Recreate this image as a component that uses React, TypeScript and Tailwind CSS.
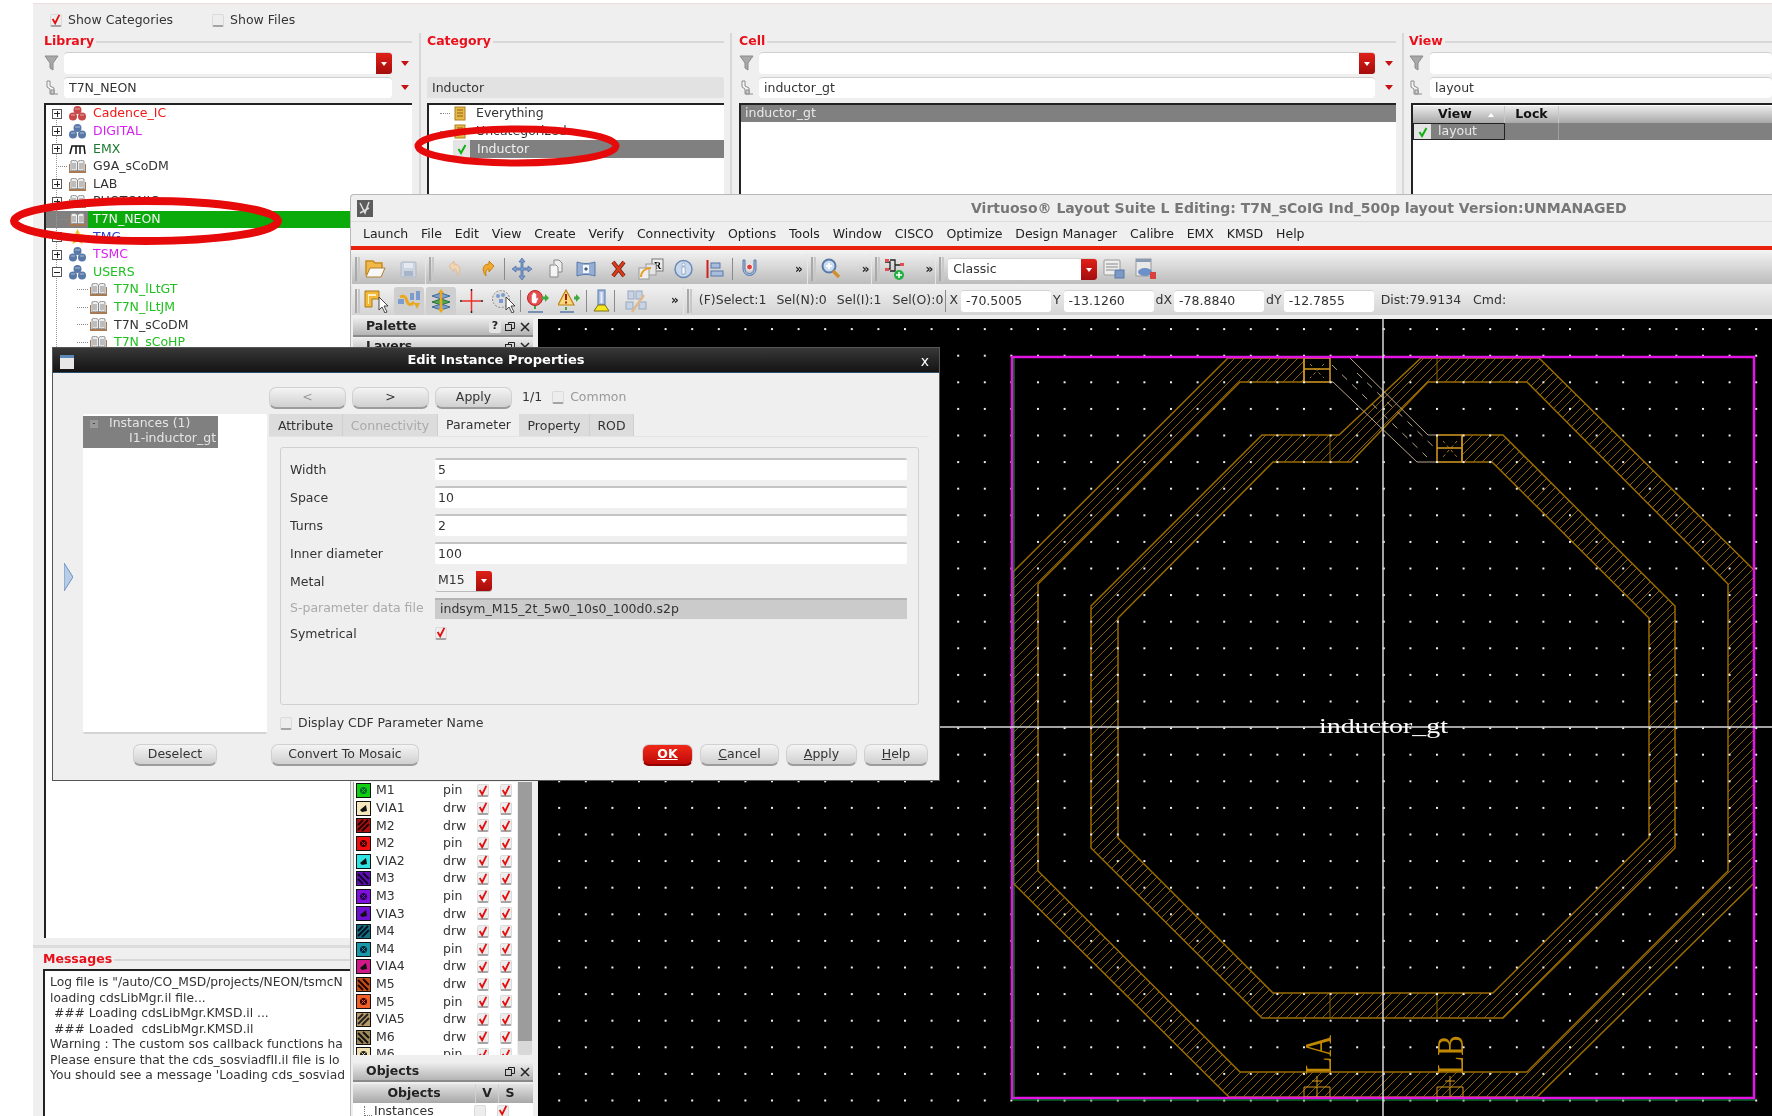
import React from "react";

const RedArrow = () => (
  <svg width="10" height="7" viewBox="0 0 10 7"><path d="M1 1h8L5 6z" fill="#c81010" /></svg>
);

const ComboButton = () => (
  <div className="flex w-[16px] h-full items-center justify-center rounded-r-[3px] bg-gradient-to-b from-[#e02018] to-[#a40c0c]">
    <svg width="8" height="6" viewBox="0 0 8 6"><path d="M1 1h6L4 5z" fill="#fff" /></svg>
  </div>
);

const Funnel = () => (
  <svg width="15" height="16" viewBox="0 0 15 16">
    <path d="M1 1h13L9 8v7L6 13V8z" fill="#a8a8a8" stroke="#8a8a8a" />
  </svg>
);

const TreeFilter = () => (
  <svg width="14" height="16" viewBox="0 0 14 16" fill="none" stroke="#8c8c8c">
    <path d="M2 1h3v5l4 2v6H5V9L2 7z" fill="#f4f4f4" />
    <path d="M6 10h3v4H6z" fill="#d0d0d0" />
    <path d="M9 14h4" />
  </svg>
);

const RedCheck = () => (
  <svg width="12" height="13" viewBox="0 0 12 13">
    <path d="M2 6l3 5 5-10" fill="none" stroke="#e41010" strokeWidth="2.200" />
  </svg>
);

const CheckBox = ({ checked }: { checked?: boolean }) => (
  <div className="flex h-[13px] w-[12px] shrink-0 items-center justify-center rounded-[2px] border border-[#dadada] border-b-2 border-b-[#a4a4a4] bg-[#ededed]">
    {checked && <RedCheck />}
  </div>
);

const GreenCheck = () => (
  <svg width="12" height="12" viewBox="0 0 12 12">
    <path d="M2.500 6 5 10l4.500-8" fill="none" stroke="#10b010" strokeWidth="2" />
  </svg>
);

const BookIcon = () => (
  <svg width="17" height="13" viewBox="0 0 17 13">
    <path d="M0 4v9h17V4h-1v7H1V4z" fill="#a87850" />
    <path d="M2 1c2-1 5-1 6.500 1C10 0 13 0 15 1v10c-2-1-5-1-6.500 0C7 10 4 10 2 11z" fill="#eee" stroke="#909090" />
    <path d="M8.500 2v9M4 3v6M6 3v6M11 3v6M13 3v6" stroke="#8a8a8a" />
  </svg>
);

const CubesIcon = ({ color }: { color: string }) => (
  <svg width="17" height="15" viewBox="0 0 17 15">
    <circle cx="8.500" cy="4" r="4" fill={color} />
    <circle cx="4" cy="10.500" r="4" fill={color} />
    <circle cx="13" cy="10.500" r="4" fill={color} />
    <path d="M6 3h5M2 9h4M11 9h4" stroke="#fff" strokeOpacity="0.5" />
  </svg>
);

const EmxIcon = () => (
  <svg width="17" height="12" viewBox="0 0 17 12" fill="none" stroke="#111" strokeWidth="1.500">
    <path d="M1 11 3 3h4v8M7 3h4v8M11 3h4l1 8" />
  </svg>
);

const ScrollIcon = () => (
  <svg width="14" height="15" viewBox="0 0 14 15">
    <rect x="2" y="1" width="10" height="13" fill="#e8b848" stroke="#b08020" />
    <path d="M4 4h6M4 7h6M4 10h6" stroke="#8a6010" />
  </svg>
);

const ExpandBox = ({ open }: { open?: boolean }) => (
  <div className="relative flex h-[10px] w-[10px] shrink-0 items-center justify-center border border-[#555] bg-white">
    <div className="h-px w-[6px] bg-[#222]" />
    {!open && <div className="absolute h-[6px] w-px bg-[#222]" />}
  </div>
);

type TreeItem = {
  label: string;
  color: string;
  icon: "red" | "blue" | "emx" | "book" | "star";
  box: "plus" | "minus" | "none";
  child?: boolean;
  selected?: boolean;
};

const libs: TreeItem[] = [
  { label: "Cadence_IC", color: "text-[#f01818]", icon: "red", box: "plus" },
  { label: "DIGITAL", color: "text-[#d820f0]", icon: "blue", box: "plus" },
  { label: "EMX", color: "text-[#1c7a30]", icon: "emx", box: "plus" },
  { label: "G9A_sCoDM", color: "text-[#333]", icon: "book", box: "none" },
  { label: "LAB", color: "text-[#333]", icon: "book", box: "plus" },
  { label: "PHOTONIC", color: "text-[#333]", icon: "book", box: "plus" },
  { label: "T7N_NEON", color: "text-white", icon: "book", box: "none", selected: true },
  { label: "TMG", color: "text-[#3040c0]", icon: "star", box: "plus" },
  { label: "TSMC", color: "text-[#d820f0]", icon: "blue", box: "plus" },
  { label: "USERS", color: "text-[#20c020]", icon: "blue", box: "minus" },
  { label: "T7N_lLtGT", color: "text-[#20c020]", icon: "book", box: "none", child: true },
  { label: "T7N_lLtJM", color: "text-[#20c020]", icon: "book", box: "none", child: true },
  { label: "T7N_sCoDM", color: "text-[#333]", icon: "book", box: "none", child: true },
  { label: "T7N_sCoHP", color: "text-[#20c020]", icon: "book", box: "none", child: true },
];

const LibIcon = ({ kind }: { kind: TreeItem["icon"] }) => {
  if (kind === "red") return <CubesIcon color="#c84848" />;
  if (kind === "blue") return <CubesIcon color="#5878a8" />;
  if (kind === "emx") return <EmxIcon />;
  if (kind === "star")
    return (
      <svg width="17" height="15" viewBox="0 0 17 15">
        <path d="M8.500 0l2.500 5 5.500.8-4 3.800 1 5.400-5-2.600L3.500 15l1-5.400-4-3.800L6 5z" fill="#f0c030" />
      </svg>
    );
  return <BookIcon />;
};

const LibRow = ({ item }: { item: TreeItem }) => (
  <div className={`flex h-[17.6px] items-center ${item.selected ? "bg-[#808080]" : ""}`}>
    {item.child ? (
      <div className="ml-[31px] mr-[2px] w-[11px] border-t border-dotted border-[#888]" />
    ) : item.box === "none" ? (
      <div className="ml-[10px] mr-[2px] w-[11px] border-t border-dotted border-[#888]" />
    ) : (
      <div className="ml-[6px] mr-[7px]">
        <ExpandBox open={item.box === "minus"} />
      </div>
    )}
    <div className="flex h-full w-[17px] shrink-0 items-center">
      <LibIcon kind={item.icon} />
    </div>
    {item.selected ? (
      <div className="ml-[2px] flex h-full flex-1 items-center bg-[#0bab0b] pl-[5px] text-[#f2f2f2]">{item.label}</div>
    ) : (
      <div className={`ml-[7px] ${item.color}`}>{item.label}</div>
    )}
  </div>
);

const Field = ({ text, width, combo }: { text?: string; width: string; combo?: boolean }) => (
  <div className={`flex h-full items-center justify-between rounded-[4px] border-t border-[#cfcfcf] bg-white ${width}`}>
    <span className="pl-[5px] text-[#333]">{text}</span>
    {combo && <ComboButton />}
  </div>
);

const PanelLabel = ({ text }: { text: string }) => (
  <div className="flex h-[16px] items-center pt-[1px]">
    <span className="text-[12.5px] font-bold text-[#e8101a]">{text}</span>
    <div className="ml-[2px] h-[2px] flex-1 bg-[#d8d8d8]" />
  </div>
);

const FilterRows = ({ value, field, arrow }: { value: string; field: string; arrow: string }) => (
  <>
    <div className="mt-[3px] flex h-[22px] items-center">
      <div className="flex w-[20px] shrink-0"><Funnel /></div>
      <Field width={field} combo />
      <div className={`flex items-center ${arrow}`}><RedArrow /></div>
    </div>
    <div className="mt-[3px] flex h-[21px] items-center">
      <div className="flex w-[20px] shrink-0 pl-[1px]"><TreeFilter /></div>
      <Field width={field} text={value} />
      <div className={`flex items-center ${arrow}`}><RedArrow /></div>
    </div>
  </>
);

const LibraryManager = () => (
  <div className="absolute left-[33px] top-[3px] h-[1113px] w-[1739px] border-t border-[#f0dcdc] bg-[#efefef]">
    <div className="flex h-[29px] items-center pl-[17px] pt-[3px]">
      <CheckBox checked />
      <span className="ml-[6px] text-[#333]">Show Categories</span>
      <div className="ml-[39px]"><CheckBox /></div>
      <span className="ml-[6px] text-[#333]">Show Files</span>
    </div>
    <div className="flex h-[906px]">
      <div className="ml-[11px] w-[377px] border-r-2 border-[#d8d8d8] pr-[7px]">
        <PanelLabel text="Library" />
        <FilterRows value="T7N_NEON" field="w-[328px]" arrow="ml-[8px]" />
        <div className="relative mt-[5px] h-[835px] border-l-2 border-t-2 border-[#222] bg-white">
          <div className="absolute left-[10px] top-[6px] h-[240px] border-l border-dotted border-[#999]" />
          {libs.map((l) => (
            <LibRow key={l.label} item={l} />
          ))}
        </div>
      </div>
      <div className="ml-[6px] w-[305px] border-r-2 border-[#d8d8d8] pr-[6px]">
        <PanelLabel text="Category" />
        <div className="mt-[28px] flex h-[21px] items-center rounded-t-[3px] bg-[#e2e2e2] pl-[5px] pt-[1px] text-[#333]">Inductor</div>
        <div className="mt-[5px] h-[835px] border-l-2 border-t-2 border-[#222] bg-white">
          <div className="flex h-[17.6px] items-center pl-[11px]">
            <div className="mr-[3px] w-[10px] border-t border-dotted border-[#888]" />
            <ScrollIcon />
            <span className="ml-[9px] text-[#333]">Everything</span>
          </div>
          <div className="flex h-[17.6px] items-center pl-[11px]">
            <div className="mr-[3px] w-[10px] border-t border-dotted border-[#888]" />
            <ScrollIcon />
            <span className="ml-[9px] text-[#333]">Uncategorized</span>
          </div>
          <div className="flex h-[18px] items-center pl-[24px]">
            <div className="flex h-full w-[17px] items-center justify-center bg-[#e4e4e4]"><GreenCheck /></div>
            <div className="flex h-full flex-1 items-center bg-[#808080] pl-[7px] text-[#f0f0f0]">Inductor</div>
          </div>
        </div>
      </div>
      <div className="ml-[7px] w-[665px] border-r-2 border-[#d8d8d8] pr-[6px]">
        <PanelLabel text="Cell" />
        <FilterRows value="inductor_gt" field="w-[616px]" arrow="ml-[9px]" />
        <div className="mt-[5px] h-[835px] border-l-2 border-t-2 border-[#222] bg-white">
          <div className="flex h-[17px] items-center bg-[#808080] pl-[4px] text-[#e8e8e8]">inductor_gt</div>
        </div>
      </div>
      <div className="ml-[5px] flex-1">
        <PanelLabel text="View" />
        <div className="mt-[3px] flex h-[22px] items-center">
          <div className="flex w-[21px] shrink-0"><Funnel /></div>
          <Field width="flex-1" />
        </div>
        <div className="mt-[3px] flex h-[21px] items-center">
          <div className="flex w-[21px] shrink-0"><TreeFilter /></div>
          <Field width="flex-1" text="layout" />
        </div>
        <div className="ml-[2px] mt-[5px] h-[835px] border-l-2 border-t-2 border-[#222] bg-white pt-[1px]">
          <div className="flex h-[17px] items-center bg-gradient-to-b from-[#ececec] to-[#a8a8a8] font-bold text-[#111]">
            <div className="flex h-full w-[92px] items-center justify-between border-r border-[#c8c8c8] pl-[25px] pr-[9px]">
              View
              <svg width="8" height="6" viewBox="0 0 8 6"><path d="M1 5h6L4 1z" fill="#fff" /></svg>
            </div>
            <div className="flex h-full w-[54px] items-center justify-center border-r border-[#c8c8c8]">Lock</div>
          </div>
          <div className="flex h-[17px] items-center bg-[#808080] text-[#e8e8e8]">
            <div className="flex h-full w-[92px] items-center border border-[#222]">
              <div className="flex h-full w-[17px] items-center justify-center bg-[#e4e4e4]"><GreenCheck /></div>
              <span className="pl-[7px]">layout</span>
            </div>
            <div className="h-full w-[54px] border-r border-[#a0a0a0]" />
          </div>
        </div>
      </div>
    </div>
    <div className="mt-[6px] h-[3px] bg-[#dcdcdc]" />
    <div className="pl-[10px] pt-[3px]">
      <PanelLabel text="Messages" />
      <div className="mt-[2px] h-[160px] overflow-hidden border-l-2 border-t-2 border-[#222] bg-white pl-[5px] pt-[4px] text-[12.3px] leading-[15.5px] text-[#333] whitespace-pre">
        <div>Log file is "/auto/CO_MSD/projects/NEON/tsmcN</div>
        <div>loading cdsLibMgr.il file...</div>
        <div> ### Loading cdsLibMgr.KMSD.il ...</div>
        <div> ### Loaded  cdsLibMgr.KMSD.il</div>
        <div>Warning : The custom sos callback functions ha</div>
        <div>Please ensure that the cds_sosviadfII.il file is lo</div>
        <div>You should see a message 'Loading cds_sosviad</div>
      </div>
    </div>
  </div>
);

// grip plus the faint notch between two toolbar segments
const Grip = () => (
  <div className="flex h-[24px] shrink-0 items-center gap-[1px]">
    <div className="-ml-[4px] mr-[2px] h-[30px] w-px bg-[#e6e6e6]" />
    <div className="h-[24px] w-[2px] bg-[#a8a8a8]" />
    <div className="h-[24px] w-[2px] bg-[#c8c8c8]" />
  </div>
);

const Sep = () => <div className="h-[22px] w-px shrink-0 bg-[#8a8a8a]" />;

const More = () => <span className="shrink-0 text-[12px] font-bold text-[#222]">»</span>;

const I = ({ w, children }: { w: number; children: React.ReactNode }) => (
  <svg width={w} height="24" viewBox={`0 0 ${w} 24`} className="shrink-0">
    {children}
  </svg>
);

const Toolbar1 = () => (
  <div className="flex h-[34px] items-center bg-gradient-to-b from-[#f4f4f4] to-[#bcbcbc] pl-[4px] pt-[4px]">
    <Grip />
    <div className="ml-[4px]">
      <I w={22}>
        <path d="M2 18V4h7l2 2h7v5" fill="#f0b848" stroke="#c88a20" strokeWidth="1.500" />
        <path d="M2 20l4-9h15l-4 9z" fill="#f8f8f8" stroke="#b08030" />
      </I>
    </div>
    <div className="ml-[14px]">
      <I w={17}>
        <rect x="1" y="5" width="15" height="15" rx="1" fill="#ccd4e0" stroke="#b0b8c8" />
        <rect x="4" y="6" width="9" height="5" fill="#e4e8f0" />
        <rect x="4" y="14" width="9" height="5" fill="#a8b4c8" />
      </I>
    </div>
    <div className="ml-[12px]"><Grip /></div>
    <div className="ml-[14px]">
      <I w={14}>
        <path d="M1 9l5-5v3c6 0 8 6 3 12 1-5-1-7-3-7v3z" fill="#f0d4b4" stroke="#dcbc98" />
      </I>
    </div>
    <div className="ml-[19px]">
      <I w={14}>
        <path d="M13 9L8 4v3C2 7 0 13 5 19c-1-5 1-7 3-7v3z" fill="#f0a830" stroke="#c88010" />
      </I>
    </div>
    <div className="ml-[9px]"><Sep /></div>
    <div className="ml-[7px]">
      <I w={20}>
        <path d="M10 1l3 4h-2v6h5V9l4 3-4 3v-2h-5v6h2l-3 4-3-4h2v-6H4v2l-4-3 4-3v2h5V5H7z" fill="#7c9cd0" stroke="#486c9c" strokeWidth="0.7" />
      </I>
    </div>
    <div className="ml-[17px]">
      <I w={14}>
        <path d="M5 7V3h5l3 3v9H9" fill="#eee" stroke="#888" />
        <path d="M1 8h6l2 2v10H1z" fill="#f4f4f4" stroke="#888" />
      </I>
    </div>
    <div className="ml-[13px]">
      <I w={20}>
        <path d="M1 5c6 2 12 2 18 0v14c-6-2-12-2-18 0z" fill="#94aed4" stroke="#5878a8" />
        <rect x="7" y="8" width="6" height="8" fill="#f4f4fa" />
        <path d="M8 12l2-2v4zM12 12l-2-2v4z" fill="#40587c" />
      </I>
    </div>
    <div className="ml-[15px]">
      <I w={15}>
        <path d="M2 5l11 14M13 5L2 19" stroke="#6a2418" strokeWidth="4" />
        <path d="M2 5l11 14M13 5L2 19" stroke="#dc3c1c" strokeWidth="2.500" />
      </I>
    </div>
    <div className="ml-[12px]">
      <I w={26}>
        <rect x="14" y="2" width="11" height="12" fill="#eee" stroke="#777" />
        <text x="16" y="12" fontSize="10" fontWeight="bold" fontFamily="Liberation Serif">R</text>
        <rect x="8" y="7" width="10" height="11" fill="#e4e4e4" stroke="#999" />
        <rect x="1" y="11" width="10" height="11" fill="#eee" stroke="#999" />
        <path d="M3 20c0-5 4-9 10-9" fill="none" stroke="#e8a020" strokeWidth="2" />
      </I>
    </div>
    <div className="ml-[10px]">
      <I w={19}>
        <circle cx="9.500" cy="12" r="8.500" fill="#c8d8ec" stroke="#6c88b4" strokeWidth="1.500" />
        <rect x="8" y="10" width="3" height="7" fill="#fff" stroke="#5878a8" strokeWidth="0.5" />
        <circle cx="9.500" cy="7.500" r="1.500" fill="#fff" stroke="#5878a8" strokeWidth="0.5" />
      </I>
    </div>
    <div className="ml-[13px]">
      <I w={18}>
        <path d="M1.500 3v18" stroke="#d02020" strokeWidth="2" />
        <rect x="5" y="6" width="9" height="5" fill="#a8bcdc" stroke="#5878a8" />
        <rect x="5" y="14" width="12" height="5" fill="#a8bcdc" stroke="#5878a8" />
      </I>
    </div>
    <div className="ml-[8px]"><Sep /></div>
    <div className="ml-[7px]">
      <I w={19}>
        <path d="M5 3H3v9a6.500 6.500 0 0 0 13 0V3h-2v9a4.500 4.500 0 0 1-9 0z" fill="#a8c0e0" stroke="#5878a8" />
        <circle cx="9.500" cy="10" r="3" fill="#e04040" stroke="#fff" />
      </I>
    </div>
    <div className="ml-[36px]"><More /></div>
    <div className="ml-[8px]"><Grip /></div>
    <div className="ml-[5px]">
      <I w={19}>
        <circle cx="8" cy="9" r="6.500" fill="#c8ddf0" stroke="#5878a8" strokeWidth="2" />
        <path d="M5 9h6M8 6v6" stroke="#fff" strokeWidth="2" />
        <path d="M12 14l6 6" stroke="#d09030" strokeWidth="3.500" />
      </I>
    </div>
    <div className="ml-[22px]"><More /></div>
    <div className="ml-[5px]"><Grip /></div>
    <div className="ml-[4px]">
      <I w={21}>
        <path d="M1 5h5v7H1M6 3h5v11H6M11 8h8" fill="none" stroke="#222" strokeWidth="1.300" />
        <rect x="1" y="2" width="4" height="3" fill="#e05050" />
        <rect x="1" y="11" width="4" height="3" fill="#e05050" />
        <rect x="16" y="6" width="4" height="3" fill="#e05050" />
        <circle cx="15" cy="18" r="5" fill="#20b040" />
        <path d="M12 18h6M15 15v6" stroke="#fff" strokeWidth="1.500" />
      </I>
    </div>
    <div className="ml-[21px]"><More /></div>
    <div className="ml-[6px]"><Grip /></div>
    <div className="ml-[4px] flex h-[22px] w-[149px] items-center justify-between rounded-[3px] border-t border-[#d4d4d4] bg-white">
      <span className="pl-[5px] text-[#333]">Classic</span>
      <ComboButton />
    </div>
    <div className="ml-[6px]">
      <I w={22}>
        <rect x="1" y="3" width="16" height="15" rx="1" fill="#eee" stroke="#999" />
        <path d="M3 7h12M3 10h12M3 13h8" stroke="#888" />
        <rect x="12" y="13" width="9" height="8" fill="#7c98c4" stroke="#5878a8" />
      </I>
    </div>
    <div className="ml-[10px]">
      <I w={22}>
        <rect x="1" y="2" width="15" height="17" fill="#e8e8e8" stroke="#999" />
        <rect x="1" y="2" width="15" height="3" fill="#889ab4" />
        <ellipse cx="10" cy="15" rx="7" ry="4" fill="#6c90c8" />
        <rect x="15" y="15" width="6" height="7" fill="#d84040" />
      </I>
    </div>
  </div>
);

const CoordField = ({ value }: { value: string }) => (
  <div className="flex h-[22px] w-[90px] shrink-0 items-center rounded-[3px] border-t border-[#d4d4d4] bg-white pl-[5px] text-[#333]">{value}</div>
);

const Cursor = ({ x, y }: { x: number; y: number }) => (
  <path
    transform={`translate(${x} ${y})`}
    d="M0 0v13l3-3 3 6 2-1-3-6h4z"
    fill="#fff"
    stroke="#333"
    strokeWidth="0.9"
  />
);

const Toolbar2 = () => (
  <div className="mt-[2px] flex h-[29px] items-center bg-gradient-to-b from-[#f0f0f0] to-[#d4d4d4] pl-[4px] text-[#333]">
    <Grip />
    <div className="ml-[4px]">
      <I w={25}>
        <path d="M1 2h14v8H8v8H1z" fill="#f4b838" stroke="#a87818" />
        <path d="M4 5h8v2H5v8H4z" fill="#fff0c8" />
        <Cursor x={15} y={8} />
      </I>
    </div>
    <div className="ml-[5px] flex h-[28px] w-[30px] items-center justify-center rounded-[3px] bg-[#cfcfcf]">
      <I w={26}>
        <rect x="2" y="10" width="6" height="5" fill="#7c9cd0" />
        <rect x="14" y="4" width="4" height="7" fill="#7c9cd0" />
        <rect x="20" y="2" width="4" height="9" fill="#7c9cd0" />
        <path d="M4 8c4-2 6 0 7 4s4 5 7 1" fill="none" stroke="#e8a820" strokeWidth="3" />
        <path d="M18 14h6l-3 6z" fill="#e8a820" />
      </I>
    </div>
    <div className="ml-[2px] flex h-[28px] w-[30px] items-center justify-center rounded-[3px] bg-[#cfcfcf]">
      <I w={22}>
        <path d="M11 4l9 3-9 3-9-3z" fill="#7c9cd0" stroke="#406c98" />
        <path d="M11 10l9 3-9 3-9-3z" fill="#50a850" stroke="#2c7040" />
        <path d="M11 15l9 3-9 3-9-3z" fill="#7c9cd0" stroke="#406c98" />
        <path d="M11 4v17" stroke="#e8a820" strokeWidth="2.500" />
        <path d="M8 4l3-4 3 4zM8 20l3 4 3-4z" fill="#e8a820" />
      </I>
    </div>
    <div className="ml-[4px]">
      <I w={23}>
        <path d="M2 12h19M11.500 2v20" stroke="#f03028" strokeWidth="1.500" />
        <path d="M0 12h2M21 12h2M11.500 0v2M11.500 22v2" stroke="#222" strokeWidth="1.500" />
      </I>
    </div>
    <div className="ml-[8px]">
      <I w={26}>
        <circle cx="10" cy="10" r="8.500" fill="#dcdcdc" stroke="#888" strokeDasharray="2 1.500" />
        <circle cx="7" cy="7" r="2" fill="#7c9cd0" />
        <circle cx="12" cy="6" r="2" fill="#7c9cd0" />
        <rect x="8" y="10" width="4" height="4" fill="#7c9cd0" />
        <Cursor x={15} y={8} />
      </I>
    </div>
    <div className="ml-[3px]"><Sep /></div>
    <div className="ml-[5px]">
      <I w={25}>
        <circle cx="9" cy="9" r="7.500" fill="#e45050" stroke="#c02020" />
        <path d="M6 13V6h1v4V4h1v6V4h1v6V5h1v5l2-1-2 5H7z" fill="#fff" stroke="#fff" strokeWidth="0.500" />
        <path d="M16 9h4" stroke="#40a840" strokeWidth="3" />
        <path d="M19 5l4 4-4 4z" fill="#40a840" />
        <path d="M9 17v3" stroke="#40a840" strokeWidth="2" />
        <path d="M2 23h15" stroke="#5878a8" strokeWidth="1.500" />
      </I>
    </div>
    <div className="ml-[7px]">
      <I w={23}>
        <path d="M8 1l8 15H0z" fill="#f8d878" stroke="#c08018" strokeWidth="1.200" />
        <path d="M8 5v6M8 12.500v2" stroke="#a81818" strokeWidth="2" />
        <path d="M16 9h3" stroke="#40a840" strokeWidth="3" />
        <path d="M18 5l4 4-4 4z" fill="#40a840" />
        <path d="M8 18v3" stroke="#40a840" strokeWidth="2" />
        <path d="M2 23h14" stroke="#5878a8" strokeWidth="1.500" />
      </I>
    </div>
    <div className="ml-[5px]"><Sep /></div>
    <div className="ml-[5px]">
      <I w={19}>
        <rect x="6" y="1" width="7" height="15" fill="#a8c0e0" stroke="#5878a8" />
        <rect x="8.500" y="3" width="2" height="11" fill="#eef" />
        <path d="M2 22l4-6h7l4 6z" fill="#f4e820" stroke="#807010" />
      </I>
    </div>
    <div className="ml-[3px]"><Sep /></div>
    <div className="ml-[10px]">
      <I w={23}>
        <rect x="3" y="2" width="6" height="8" fill="#c8d4e4" stroke="#98a8c0" />
        <rect x="11" y="2" width="6" height="8" fill="#c8d4e4" stroke="#98a8c0" />
        <rect x="1" y="13" width="7" height="7" fill="#c8d4e4" stroke="#98a8c0" />
        <rect x="14" y="13" width="7" height="7" fill="#c8d4e4" stroke="#98a8c0" />
        <path d="M7 23L19 6" stroke="#e0b890" strokeWidth="2.500" />
      </I>
    </div>
    <div className="ml-[23px]"><More /></div>
    <div className="ml-[8px]"><Grip /></div>
    <span className="ml-[7px] shrink-0">(F)Select:1</span>
    <span className="ml-[10px] shrink-0">Sel(N):0</span>
    <span className="ml-[10px] shrink-0">Sel(I):1</span>
    <span className="ml-[11px] shrink-0">Sel(O):0</span>
    <div className="ml-[2px]"><Sep /></div>
    <span className="ml-[3px] shrink-0">X</span>
    <div className="ml-[3px]"><CoordField value="-70.5005" /></div>
    <span className="ml-[2px] shrink-0">Y</span>
    <div className="ml-[3px]"><CoordField value="-13.1260" /></div>
    <span className="ml-[2px] shrink-0">dX</span>
    <div className="ml-[2px]"><CoordField value="-78.8840" /></div>
    <span className="ml-[2px] shrink-0">dY</span>
    <div className="ml-[2px]"><CoordField value="-12.7855" /></div>
    <span className="ml-[7px] shrink-0">Dist:79.9134</span>
    <span className="ml-[12px] shrink-0">Cmd:</span>
  </div>
);

const DockButtons = ({ help }: { help?: boolean }) => (
  <div className="ml-auto flex items-center gap-[3px] pr-[2px] text-[11px] text-[#222]">
    {help && <span className="flex h-[13px] w-[12px] items-center justify-center rounded-[2px] bg-[#e4e4e4]">?</span>}
    <svg width="12" height="13" viewBox="0 0 12 13" fill="none" stroke="#222">
      <rect x="1.500" y="4.500" width="6" height="6" />
      <path d="M4.500 4.500v-2h6v6h-3" />
    </svg>
    <svg width="12" height="13" viewBox="0 0 12 13" stroke="#222" strokeWidth="1.500">
      <path d="M2 3l8 8M10 3l-8 8" />
    </svg>
  </div>
);

const DockTitle = ({ text, help }: { text: string; help?: boolean }) => (
  <div className="flex h-[19px] shrink-0 items-center border-b-2 border-[#8a8a8a] bg-gradient-to-b from-[#ececec] to-[#b4b4b4] pl-[13px] font-bold text-[#222]">
    {text}
    <DockButtons help={help} />
  </div>
);

type LayerRow = { name: string; purpose: string; bg: string; fg: string; hatch: "x" | "up" | "down" | "dot" };

const layerRows: LayerRow[] = [
  { name: "M1", purpose: "pin", bg: "#10d010", fg: "#063", hatch: "x" },
  { name: "VIA1", purpose: "drw", bg: "#f6e8bc", fg: "#111", hatch: "dot" },
  { name: "M2", purpose: "drw", bg: "#b01010", fg: "#200", hatch: "up" },
  { name: "M2", purpose: "pin", bg: "#f01010", fg: "#300", hatch: "x" },
  { name: "VIA2", purpose: "drw", bg: "#30e4e4", fg: "#111", hatch: "dot" },
  { name: "M3", purpose: "drw", bg: "#6010b0", fg: "#120030", hatch: "down" },
  { name: "M3", purpose: "pin", bg: "#8010e0", fg: "#200040", hatch: "x" },
  { name: "VIA3", purpose: "drw", bg: "#7010d0", fg: "#111", hatch: "dot" },
  { name: "M4", purpose: "drw", bg: "#107080", fg: "#012", hatch: "up" },
  { name: "M4", purpose: "pin", bg: "#1898a8", fg: "#023", hatch: "x" },
  { name: "VIA4", purpose: "drw", bg: "#d01888", fg: "#111", hatch: "dot" },
  { name: "M5", purpose: "drw", bg: "#c05018", fg: "#200", hatch: "down" },
  { name: "M5", purpose: "pin", bg: "#f06028", fg: "#300", hatch: "x" },
  { name: "VIA5", purpose: "drw", bg: "#b89868", fg: "#222", hatch: "up" },
  { name: "M6", purpose: "drw", bg: "#a08858", fg: "#111", hatch: "down" },
  { name: "M6", purpose: "pin", bg: "#f0e0b0", fg: "#222", hatch: "x" },
];

const Swatch = ({ row }: { row: LayerRow }) => (
  <svg width="15" height="15" viewBox="0 0 15 15" className="shrink-0">
    <rect x="0.500" y="0.500" width="14" height="14" fill={row.bg} stroke="#111" />
    {row.hatch === "x" && (
      <>
        <circle cx="7.500" cy="7.500" r="3.500" fill={row.fg} />
        <path d="M5.500 5.500l4 4M9.500 5.500l-4 4" stroke={row.bg} />
      </>
    )}
    {row.hatch === "dot" && <path d="M4 9l6-5 1 6-5 1z" fill={row.fg} />}
    {row.hatch === "up" && (
      <path d="M2 7l5-5M2 12l10-10M6 13l7-7" stroke={row.fg} strokeWidth="2" />
    )}
    {row.hatch === "down" && (
      <path d="M2 3l10 10M7 2l6 6M2 8l5 5" stroke={row.fg} strokeWidth="2" />
    )}
  </svg>
);

const Dock = () => (
  <div className="flex w-[187px] shrink-0 flex-col pl-[2px] pr-[5px] pt-[1px]">
    <DockTitle text="Palette" help />
    <div className="h-[1px] shrink-0" />
    <DockTitle text="Layers" />
    <div className="h-[425px] shrink-0" />
    <div className="flex h-[273px] shrink-0 overflow-hidden border-l border-[#999]">
      <div className="flex-1 bg-white">
        {layerRows.map((r, i) => (
          <div key={i} className="flex h-[17.6px] items-center pl-[2px] text-[#333]">
            <Swatch row={r} />
            <span className="ml-[5px] w-[67px] shrink-0">{r.name}</span>
            <span className="w-[34px] shrink-0">{r.purpose}</span>
            <CheckBox checked />
            <div className="ml-[11px]"><CheckBox checked /></div>
          </div>
        ))}
      </div>
      <div className="flex w-[16px] flex-col bg-[#efefef] px-[1px]">
        <div className="flex-1 bg-[#9c9c9c]" />
        <div className="h-[14px] rounded-b-[2px] bg-[#d8d8d8]" />
      </div>
    </div>
    <div className="mt-[8px] shrink-0">
      <DockTitle text="Objects" />
    </div>
    <div className="mt-[2px] flex h-[19px] shrink-0 items-center bg-gradient-to-b from-[#e4e4e4] to-[#a8a8a8] font-bold text-[#222]">
      <div className="flex h-full w-[123px] items-center justify-center border-r border-[#d0d0d0]">Objects</div>
      <div className="flex h-full w-[23px] items-center justify-center border-r border-[#d0d0d0]">V</div>
      <div className="flex h-full w-[22px] items-center justify-center">S</div>
      <div className="flex-1 bg-[#e8e8e8]" />
    </div>
    <div className="flex h-[16px] shrink-0 items-center bg-white pl-[11px] text-[#333]">
      <div className="mr-[2px] h-[10px] w-[8px] border-b border-l border-dotted border-[#777]" />
      <span className="w-[100px]">Instances</span>
      <CheckBox />
      <div className="ml-[11px]"><CheckBox checked /></div>
    </div>
  </div>
);

// grid dots are 26.6px apart in both directions
const Canvas = () => (
  <svg viewBox="538 319 1234 797" width="1234" height="797" className="block shrink-0 bg-black">
    <defs>
      <pattern id="hatch" patternUnits="userSpaceOnUse" width="9" height="9">
        <path d="M-2 2L2-2M0 9L9 0M7 11l4-4" stroke="#8a6000" strokeWidth="1" />
      </pattern>
      <pattern id="dots" patternUnits="userSpaceOnUse" x="1037" y="381.300" width="26.600" height="26.600">
        <rect x="0" y="0" width="2" height="2" fill="#f0f0f0" />
      </pattern>
    </defs>
    <polygon
      points="1304,358 1228,358 1013,572 1013,883 1229,1097 1537,1097 1754,883 1754,570 1539,358 1421,358 1339,435 1262,435 1091,606 1091,848 1262,1018 1503,1018 1675,848 1675,606 1503,435 1462,435 1462,462 1492,462 1649,618 1649,838 1493,993 1273,993 1118,838 1118,618 1273,462 1351,462 1428,382 1527,382 1728,584 1728,871 1527,1072 1240,1072 1038,871 1038,584 1240,382 1304,382"
      fill="url(#hatch)"
      stroke="#9a6c00"
      strokeWidth="1.500"
    />
    <path d="M1437 358v24M1330 435v27M1330 993v25M1437 993v25" stroke="#8f6400" />
    <path d="M1350 358l78 77h9M1330 382h3l84 80h20" stroke="#b8a488" fill="none" />
    <path d="M1332 365l95 92M1357 373l80 77" stroke="#b8a488" strokeDasharray="7 7" fill="none" />
    <g fill="none" stroke="#d89a20" strokeWidth="1.500">
      <rect x="1304" y="358" width="26" height="24" />
      <rect x="1437" y="435" width="25" height="27" />
      <path d="M1304 369h26M1437 448h25" />
      <path d="M1304 1087h26v10h-26zM1437 1087h26v10h-26zM1317 1087v10M1450 1087v10" strokeWidth="1" />
      <path d="M1312 1081h10M1317 1076v10M1445 1081h10M1450 1076v10" strokeWidth="1" />
      <path d="M1310 364l14 14M1324 364l-14 14M1443 441l14 16M1457 441l-14 16" strokeWidth="0.800" strokeDasharray="3 3" />
    </g>
    <text
      transform="translate(1331 1075) rotate(-90)"
      fontFamily="Liberation Serif"
      fontSize="37"
      fill="#c08800"
      textLength="40"
      lengthAdjust="spacingAndGlyphs"
    >
      LA
    </text>
    <text
      transform="translate(1463 1075) rotate(-90)"
      fontFamily="Liberation Serif"
      fontSize="37"
      fill="#c08800"
      textLength="40"
      lengthAdjust="spacingAndGlyphs"
    >
      LB
    </text>
    <rect x="538" y="319" width="1234" height="797" fill="url(#dots)" />
    <rect x="1012" y="357" width="742" height="741" fill="none" stroke="#e414e4" strokeWidth="2.500" />
    <path d="M1014 358v740M1012 1100h743" stroke="#10a040" />
    <path d="M1383 319v797M538 727h1234" stroke="#d8d8d8" strokeWidth="1.500" />
    <text
      x="1319"
      y="733"
      fontFamily="Liberation Serif"
      fontSize="22"
      fill="#fff"
      textLength="129"
      lengthAdjust="spacingAndGlyphs"
    >
      inductor_gt
    </text>
  </svg>
);

const menus = [
  "Launch", "File", "Edit", "View", "Create", "Verify", "Connectivity", "Options", "Tools",
  "Window", "CISCO", "Optimize", "Design Manager", "Calibre", "EMX", "KMSD", "Help",
];

const VirtuosoWindow = () => (
  <div className="absolute left-[350px] top-[194px] flex h-[922px] w-[1422px] flex-col overflow-hidden rounded-tl-[4px] border-l border-t border-[#b8b8b8] bg-[#efefef]">
    <div className="relative flex h-[27px] shrink-0 items-center border-b border-[#dcdcdc] pl-[620px] text-[14px] font-bold text-[#777]">
      <svg width="16" height="17" viewBox="0 0 16 17" className="absolute left-[6px] top-[5px]">
        <rect width="16" height="17" fill="#5c5c5c" />
        <path d="M3 3l5 10 4-11M3 13l9-5" stroke="#ddd" strokeWidth="1.500" fill="none" />
      </svg>
      Virtuoso® Layout Suite L Editing: T7N_sCoIG Ind_500p layout Version:UNMANAGED
    </div>
    <div className="flex h-[24px] shrink-0 items-center gap-[12.8px] pl-[12px] text-[#222]">
      {menus.map((m) => (
        <span key={m} className="shrink-0">{m}</span>
      ))}
    </div>
    <div className="h-[4px] shrink-0 bg-[#e8200c]" />
    <Toolbar1 />
    <Toolbar2 />
    <div className="mt-[2px] flex flex-1 overflow-hidden">
      <Dock />
      <div className="mt-[2px]"><Canvas /></div>
    </div>
  </div>
);

const DlgButton = ({ label, width, red }: { label: React.ReactNode; width: string; red?: boolean }) => (
  <div
    className={`flex h-[22px] shrink-0 items-center justify-center rounded-[7px] border border-[#d0d0d0] border-b-2 ${width} ${
      red
        ? "border-[#c00000] border-b-[#900000] bg-gradient-to-b from-[#f02818] to-[#c00808] font-bold text-white"
        : "border-b-[#9c9c9c] bg-gradient-to-b from-[#f4f4f4] to-[#d0d0d0] text-[#333]"
    }`}
  >
    {label}
  </div>
);

const params = [
  ["Width", "5"],
  ["Space", "10"],
  ["Turns", "2"],
  ["Inner diameter", "100"],
];

const tabBase = "flex h-full items-center justify-center bg-[#dcdcdc] border-r border-[#cfcfcf]";

const EditDialog = () => (
  <div className="absolute left-[52px] top-[347px] flex h-[434px] w-[888px] flex-col border border-[#555] bg-[#efefef] text-[#333]">
    <div className="relative flex h-[25px] shrink-0 items-center justify-center border-b border-[#2c4c6c] bg-gradient-to-b from-[#383838] to-[#141414] text-[13px] font-bold text-white">
      <svg width="14" height="14" viewBox="0 0 14 14" className="absolute left-[7px] top-[7px]">
        <rect width="14" height="14" fill="#e8e8e8" />
        <rect width="14" height="3" fill="#5c88b8" />
      </svg>
      Edit Instance Properties
      <span className="absolute right-[10px] top-[3px] text-[14px] font-normal">x</span>
    </div>
    <div className="flex flex-1">
      <div className="w-[30px] shrink-0 pl-[11px] pt-[190px]">
        <svg width="9" height="28" viewBox="0 0 9 28">
          <path d="M0 0l9 14L0 28z" fill="#b8cce4" stroke="#6c90c8" />
        </svg>
      </div>
      <div className="flex w-[184px] shrink-0 flex-col">
        <div className="mt-[41px] h-[320px] rounded-[2px] border-b-2 border-[#d4d4d4] bg-white pt-[2px]">
          <div className="w-[135px] bg-[#808080] pb-[2px] text-[#e4e4e4]">
            <div className="flex h-[15px] items-center pl-[7px]">
              <div className="flex h-[8px] w-[8px] items-center justify-center bg-[#999] text-[8px] leading-none text-[#222]">-</div>
              <span className="ml-[11px]">Instances (1)</span>
            </div>
            <div className="flex h-[15px] items-center pl-[46px]">I1-inductor_gt</div>
          </div>
        </div>
        <div className="mt-[10px] pl-[50px]"><DlgButton label="Deselect" width="w-[84px]" /></div>
      </div>
      <div className="ml-[2px] flex w-[660px] shrink-0 flex-col">
        <div className="mt-[13px] flex h-[23px] items-center">
          <DlgButton label={<span className="text-[#999]">&lt;</span>} width="w-[77px]" />
          <div className="ml-[6px]"><DlgButton label=">" width="w-[77px]" /></div>
          <div className="ml-[6px]"><DlgButton label="Apply" width="w-[77px]" /></div>
          <span className="ml-[10px]">1/1</span>
          <div className="ml-[10px]"><CheckBox /></div>
          <span className="ml-[6px] text-[#999]">Common</span>
        </div>
        <div className="mt-[5px] flex h-[23px] items-stretch border-b border-[#e4e4e4]">
          <div className={`${tabBase} w-[74px] pt-[2px]`}>Attribute</div>
          <div className={`${tabBase} w-[95px] pt-[2px] text-[#aaa]`}>Connectivity</div>
          <div className="flex h-full w-[81px] items-center justify-center bg-[#efefef]">Parameter</div>
          <div className={`${tabBase} w-[71px] pt-[2px]`}>Property</div>
          <div className={`${tabBase} w-[44px] pt-[2px]`}>ROD</div>
        </div>
        <div className="ml-[11px] mt-[10px] flex h-[258px] w-[639px] flex-col rounded-[3px] border border-[#d0d0d0] pl-[9px] pr-[11px] pt-[10px]">
          <div className="flex flex-col gap-[6px]">
            {params.map(([k, v]) => (
              <div key={k} className="flex h-[22px] items-center">
                <span className="w-[145px] shrink-0 pt-[2px]">{k}</span>
                <div className="flex h-full flex-1 items-center rounded-[2px] border-t-2 border-[#c4c4c4] bg-white pl-[3px]">{v}</div>
              </div>
            ))}
            <div className="flex h-[22px] items-center">
              <span className="w-[145px] shrink-0 pt-[2px]">Metal</span>
              <div className="flex h-[21px] w-[57px] items-center justify-between rounded-[3px] border-b border-[#bbb] bg-[#f2f2f2]">
                <span className="pl-[3px]">M15</span>
                <ComboButton />
              </div>
            </div>
            <div className="flex h-[21px] items-center">
              <span className="w-[145px] shrink-0 text-[#aaa]">S-parameter data file</span>
              <div className="flex h-full flex-1 items-center border-t-2 border-[#b4b4b4] bg-[#cbcbcb] pl-[5px]">indsym_M15_2t_5w0_10s0_100d0.s2p</div>
            </div>
          </div>
          <div className="mt-[4px] flex h-[20px] items-center">
            <span className="w-[145px] shrink-0 pt-[2px]">Symetrical</span>
            <CheckBox checked />
          </div>
        </div>
        <div className="ml-[11px] mt-[11px] flex h-[14px] items-center">
          <CheckBox />
          <span className="ml-[6px]">Display CDF Parameter Name</span>
        </div>
        <div className="mt-[14px] flex items-center">
          <div className="ml-[2px]"><DlgButton label="Convert To Mosaic" width="w-[148px]" /></div>
          <div className="ml-[223px]"><DlgButton label={<u>OK</u>} width="w-[51px]" red /></div>
          <div className="ml-[7px]"><DlgButton label={<span><u>C</u>ancel</span>} width="w-[79px]" /></div>
          <div className="ml-[7px]"><DlgButton label={<span><u>A</u>pply</span>} width="w-[71px]" /></div>
          <div className="ml-[7px]"><DlgButton label={<span><u>H</u>elp</span>} width="w-[64px]" /></div>
        </div>
      </div>
    </div>
  </div>
);

const App = () => (
  <div className="relative h-[1116px] w-[1772px] overflow-hidden bg-white font-['DejaVu_Sans',sans-serif] text-[12.5px] blur-[0.45px]">
    <LibraryManager />
    <VirtuosoWindow />
    <EditDialog />
    <svg width="1772" height="1116" className="pointer-events-none absolute left-0 top-0">
      <ellipse cx="146" cy="221" rx="132" ry="20" fill="none" stroke="#e60a0a" strokeWidth="8" />
      <ellipse cx="517" cy="146" rx="99" ry="17" fill="none" stroke="#e60a0a" strokeWidth="7" />
    </svg>
  </div>
);

export default App;
